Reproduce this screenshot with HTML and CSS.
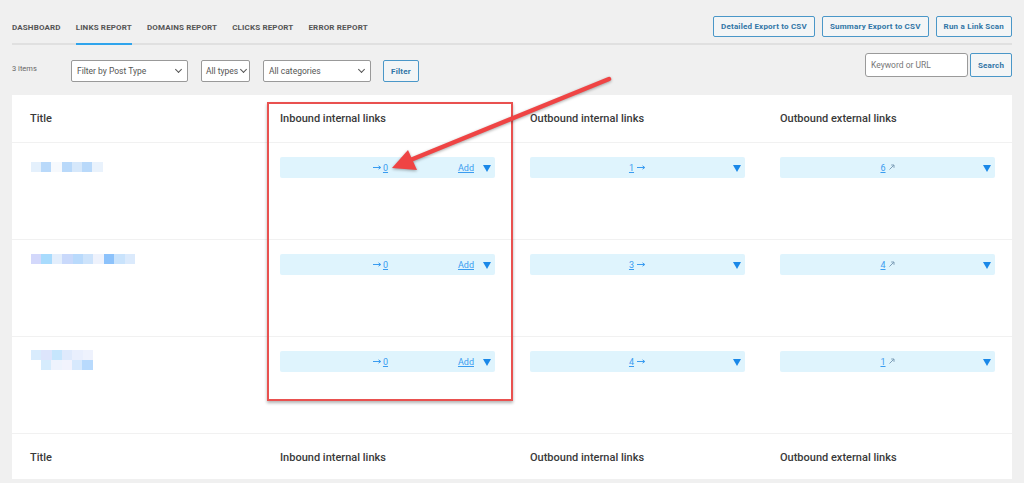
FILE: index.html
```html
<!DOCTYPE html>
<html lang="en">
<head>
    <meta charset="UTF-8">
    <meta name="viewport" content="width=device-width, initial-scale=1.0">
    <title>Links Report</title>
    <link rel="stylesheet" href="styles.css">
</head>
<body>
    <div class="wrap">
        <div class="topbar">
            <nav class="tabs">
                <a href="#">Dashboard</a>
                <a href="#" class="active">Links Report</a>
                <a href="#">Domains Report</a>
                <a href="#">Clicks Report</a>
                <a href="#">Error Report</a>
            </nav>
            <div class="actions">
                <button class="btn">Detailed Export to CSV</button>
                <button class="btn">Summary Export to CSV</button>
                <button class="btn">Run a Link Scan</button>
            </div>
        </div>

        <div class="filters">
            <div class="filters-left">
                <span class="count">3 items</span>
                <div class="select sel-post">Filter by Post Type <span class="chev"></span></div>
                <div class="select sel-types">All types <span class="chev"></span></div>
                <div class="select sel-cats">All categories <span class="chev"></span></div>
                <button class="btn btn-filter">Filter</button>
            </div>
            <div class="filters-right">
                <div class="search-input">Keyword or URL</div>
                <button class="btn btn-search">Search</button>
            </div>
        </div>

        <div class="panel">
            <div class="row head">
                <div class="cell">Title</div>
                <div class="cell">Inbound internal links</div>
                <div class="cell">Outbound internal links</div>
                <div class="cell">Outbound external links</div>
            </div>

            <div class="row item">
                <div class="cell"><div class="blur blur-1"></div></div>
                <div class="cell">
                    <div class="pill inbound"><a href="#" class="num"><svg class="arrow-in" width="9" height="5" viewBox="0 0 9 5"><path d="M0 2.5H7.5M5.5 0.8L7.8 2.5L5.5 4.2" stroke="#3a9cf0" stroke-width="1" fill="none"/></svg>0</a><a href="#" class="add">Add</a><span class="tri"></span></div>
                </div>
                <div class="cell">
                    <div class="pill"><a href="#" class="num">1</a><svg class="arrow-out" width="9" height="5" viewBox="0 0 9 5"><path d="M0 2.5H7.5M5.5 0.8L7.8 2.5L5.5 4.2" stroke="#3a9cf0" stroke-width="1" fill="none"/></svg><span class="tri"></span></div>
                </div>
                <div class="cell">
                    <div class="pill"><a href="#" class="num">6</a><svg class="ext" width="6" height="6" viewBox="0 0 6 6"><path d="M0.5 5.5L5 1M2.2 1H5V3.8" stroke="#7f9fb8" stroke-width="1" fill="none"/></svg><span class="tri"></span></div>
                </div>
            </div>

            <div class="row item">
                <div class="cell"><div class="blur blur-2"></div></div>
                <div class="cell">
                    <div class="pill inbound"><a href="#" class="num"><svg class="arrow-in" width="9" height="5" viewBox="0 0 9 5"><path d="M0 2.5H7.5M5.5 0.8L7.8 2.5L5.5 4.2" stroke="#3a9cf0" stroke-width="1" fill="none"/></svg>0</a><a href="#" class="add">Add</a><span class="tri"></span></div>
                </div>
                <div class="cell">
                    <div class="pill"><a href="#" class="num">3</a><svg class="arrow-out" width="9" height="5" viewBox="0 0 9 5"><path d="M0 2.5H7.5M5.5 0.8L7.8 2.5L5.5 4.2" stroke="#3a9cf0" stroke-width="1" fill="none"/></svg><span class="tri"></span></div>
                </div>
                <div class="cell">
                    <div class="pill"><a href="#" class="num">4</a><svg class="ext" width="6" height="6" viewBox="0 0 6 6"><path d="M0.5 5.5L5 1M2.2 1H5V3.8" stroke="#7f9fb8" stroke-width="1" fill="none"/></svg><span class="tri"></span></div>
                </div>
            </div>

            <div class="row item">
                <div class="cell"><div class="blur blur-3a"></div><div class="blur blur-3b"></div></div>
                <div class="cell">
                    <div class="pill inbound"><a href="#" class="num"><svg class="arrow-in" width="9" height="5" viewBox="0 0 9 5"><path d="M0 2.5H7.5M5.5 0.8L7.8 2.5L5.5 4.2" stroke="#3a9cf0" stroke-width="1" fill="none"/></svg>0</a><a href="#" class="add">Add</a><span class="tri"></span></div>
                </div>
                <div class="cell">
                    <div class="pill"><a href="#" class="num">4</a><svg class="arrow-out" width="9" height="5" viewBox="0 0 9 5"><path d="M0 2.5H7.5M5.5 0.8L7.8 2.5L5.5 4.2" stroke="#3a9cf0" stroke-width="1" fill="none"/></svg><span class="tri"></span></div>
                </div>
                <div class="cell">
                    <div class="pill"><a href="#" class="num">1</a><svg class="ext" width="6" height="6" viewBox="0 0 6 6"><path d="M0.5 5.5L5 1M2.2 1H5V3.8" stroke="#7f9fb8" stroke-width="1" fill="none"/></svg><span class="tri"></span></div>
                </div>
            </div>

            <div class="row foot">
                <div class="cell">Title</div>
                <div class="cell">Inbound internal links</div>
                <div class="cell">Outbound internal links</div>
                <div class="cell">Outbound external links</div>
            </div>
        </div>
    </div>

    <!-- annotation over the screenshot -->
    <div class="highlight"></div>
    <svg class="pointer" width="1024" height="483" viewBox="0 0 1024 483">
        <line x1="609" y1="79" x2="408" y2="161" stroke="#ef4444" stroke-width="4.5" stroke-linecap="round"/>
        <polygon points="392,168 408,150 417,170" fill="#ef4444"/>
    </svg>
</body>
</html>
```

FILE: styles.css
```css
body {
    margin: 0;
    background: #f0f0f0;
    font-family: 'Roboto', 'Liberation Sans', sans-serif;
    color: #3c3c3c;
    width: 1024px;
    height: 483px;
    overflow: hidden;
    position: relative;
}
.wrap {
    padding: 0 12px;
}

/* top navigation */
.topbar {
    display: flex;
    justify-content: space-between;
    align-items: flex-start;
    height: 43px;
    border-bottom: 2px solid #e0e0e0;
}
.tabs {
    display: flex;
    gap: 15px;
}
.tabs a {
    display: block;
    padding-top: 23px;
    height: 20px;
    font-size: 8px;
    line-height: 10px;
    font-weight: 700;
    text-transform: uppercase;
    letter-spacing: 0.15px;
    color: #555;
    text-decoration: none;
    border-bottom: 2px solid transparent;
}
.tabs a.active {
    border-bottom-color: #2fa4ec;
}
.actions {
    display: flex;
    gap: 7px;
    margin-top: 16px;
}
.btn {
    font-family: 'Roboto', 'Liberation Sans', sans-serif;
    height: 21px;
    padding: 0 7px;
    font-size: 8px;
    font-weight: 700;
    letter-spacing: 0.2px;
    color: #3176a6;
    background: #f3f5f6;
    border: 1px solid #4a97c8;
    border-radius: 2px;
    white-space: nowrap;
}

/* filter row */
.filters {
    display: flex;
    justify-content: space-between;
    align-items: flex-start;
    height: 50px;
}
.filters-left {
    display: flex;
    align-items: center;
    margin-top: 15px;
}
.count {
    font-size: 7.5px;
    color: #666;
    width: 59px;
    margin-top: -6px;
}
.select {
    display: flex;
    align-items: center;
    justify-content: space-between;
    box-sizing: border-box;
    height: 22px;
    padding: 0 6px 0 5px;
    margin-right: 13px;
    background: #fff;
    border: 1px solid #999;
    border-radius: 2px;
    font-size: 8.5px;
    color: #555;
    white-space: nowrap;
}
.sel-post { width: 117px; }
.sel-types { width: 49px; padding-left: 4px; padding-right: 4px; }
.sel-cats { width: 108px; margin-right: 12px; }
.chev {
    flex: none;
    width: 4px;
    height: 4px;
    border-right: 1.2px solid #555;
    border-bottom: 1.2px solid #555;
    transform: rotate(45deg);
    margin-top: -3px;
    margin-left: 3px;
}
.btn-filter {
    height: 22px;
    width: 36px;
    padding: 0;
}
.filters-right {
    display: flex;
    gap: 2px;
    margin-top: 8px;
}
.search-input {
    box-sizing: border-box;
    width: 103px;
    height: 24px;
    padding: 0 5px;
    line-height: 22px;
    background: #fff;
    border: 1px solid #9a9a9a;
    border-radius: 3px;
    font-size: 8.5px;
    color: #777;
}
.btn-search {
    height: 24px;
    width: 42px;
    padding: 0;
}

/* table panel */
.panel {
    background: #fff;
    height: 384px;
}
.row {
    display: flex;
    border-bottom: 1px solid #f1f1f1;
}
.row .cell {
    box-sizing: border-box;
    width: 250px;
    padding: 0 17px 0 18px;
}
.head, .foot {
    height: 47px;
    align-items: center;
    font-size: 11px;
    font-weight: 500;
    color: #3a3a3a;
}
.foot {
    border-bottom: none;
    height: 46px;
}
.item {
    height: 96px;
}
.item .cell {
    padding-top: 14px;
}

/* pixelated titles */
.blur {
    height: 10px;
    margin-top: 5px;
    margin-left: 1px;
}
.blur-1 {
    width: 72px;
    background: linear-gradient(90deg,
        #e4f0fc 0 10px, #b9d9fa 10px 20px, #f6f9fd 20px 31px, #b9d9fa 31px 41px,
        #d6e8fb 41px 51px, #b9d9fa 51px 61px, #e9f2fc 61px 72px);
}
.blur-2 {
    width: 104px;
    margin-top: 0;
    background: linear-gradient(90deg,
        #d3d8fb 0 10px, #a8dbfd 10px 21px, #e3eefc 21px 31px, #c9d9fb 31px 42px,
        #b9dafc 42px 52px, #cde3fb 52px 62px, #eef2fc 62px 73px, #8cc2fb 73px 83px,
        #c9e3fc 83px 94px, #dbeafc 94px 104px);
}
.blur-3a {
    width: 62px;
    margin-top: -1px;
    background: linear-gradient(90deg,
        #d9ecfd 0 10px, #dde5fc 10px 21px, #c6e6fd 21px 31px, #dfeafc 31px 41px,
        #e9effd 41px 52px, #eef2fd 52px 62px);
}
.blur-3b {
    width: 52px;
    margin-top: 0;
    margin-left: 11px;
    background: linear-gradient(90deg,
        #d6ecfd 0 10px, #eef3fd 10px 21px, #f2f3fd 21px 31px, #d7e9fd 31px 41px,
        #b8dafd 41px 52px);
}

/* link count pills */
.pill {
    position: relative;
    display: flex;
    align-items: center;
    justify-content: center;
    height: 21px;
    background: #dff4fd;
    border-radius: 2px;
    font-size: 9px;
}
.pill a {
    color: #3a9cf0;
}
.pill .num {
    text-decoration: underline;
}
.pill.inbound .num {
    margin-right: 14px;
}
.arrow-in {
    margin-right: 1px;
    vertical-align: 1px;
}
.arrow-out {
    margin-left: 3px;
}
.pill .ext {
    margin-left: 3px;
    margin-bottom: 1px;
}
.pill .add {
    position: absolute;
    right: 21px;
    top: 6px;
}
.tri {
    position: absolute;
    right: 4px;
    top: 8px;
    width: 0;
    height: 0;
    border-left: 4.5px solid transparent;
    border-right: 4.5px solid transparent;
    border-top: 7px solid #1a88e8;
}

/* red annotation */
.highlight {
    position: absolute;
    left: 267px;
    top: 102px;
    width: 242px;
    height: 295px;
    border: 2px solid #e9514f;
    box-shadow: 0 2px 3px rgba(0, 0, 0, 0.3);
}
.pointer {
    position: absolute;
    left: 0;
    top: 0;
    filter: drop-shadow(0 1px 1.5px rgba(0, 0, 0, 0.35));
}
```
